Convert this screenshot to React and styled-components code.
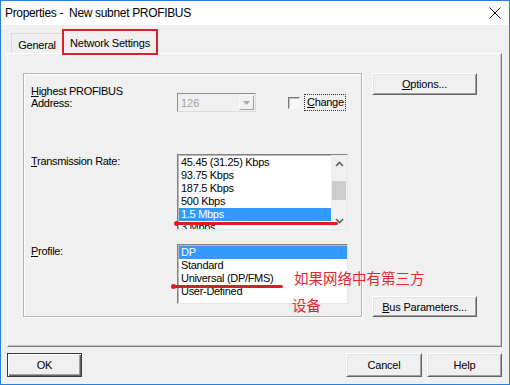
import React from "react";
import styled, { createGlobalStyle } from "styled-components";

const Global = createGlobalStyle`
  html, body { margin: 0; padding: 0; background: #fff; }
  body { font-family: "Liberation Sans", Arial, sans-serif; font-size: 11px; color: #000; }
  * { box-sizing: border-box; }
  u { text-decoration-thickness: 1px; text-underline-offset: 1px; }
`;

const Window = styled.div`
  width: 510px;
  height: 385px;
  border: 1px solid #2c7fd6;
  background: #f0f0f0;
  display: flex;
  flex-direction: column;
`;

const TitleBar = styled.div`
  height: 24px;
  flex: none;
  background: #fff;
  display: flex;
  align-items: center;
  justify-content: space-between;
  padding: 0 8px 0 4px;
  font-size: 12px;
  letter-spacing: -0.33px;
  white-space: pre;
`;

const Body = styled.div`
  flex: 1;
  display: flex;
  flex-direction: column;
  padding: 5px 7px 7px 6px;
`;

const TabRow = styled.div`
  height: 23px;
  flex: none;
  display: flex;
  align-items: flex-end;
  padding-left: 4px;
  position: relative;
  z-index: 2;
`;

const Tab = styled.div`
  position: relative;
  width: ${(p) => p.$w}px;
  height: ${(p) => (p.$active ? 24 : 20)}px;
  margin-bottom: ${(p) => (p.$active ? -1 : 0)}px;
  border: 1px solid ${(p) => (p.$active ? "#ffffff" : "#d9d9d9")};
  border-right-color: ${(p) => (p.$active ? "#8a8a8a" : "#d9d9d9")};
  border-bottom: none;
  background: #f0f0f0;
  display: flex;
  align-items: center;
  justify-content: center;
  padding-top: ${(p) => (p.$active ? 0 : 2)}px;
  letter-spacing: -0.2px;
`;

const RedBox = styled.div`
  position: absolute;
  top: -2px;
  left: -2px;
  right: -2px;
  bottom: -1px;
  border: 2px solid #d5222c;
  pointer-events: none;
`;

const Panel = styled.div`
  flex: 1;
  display: flex;
  align-items: stretch;
  padding: 19px 0 29px 15px;
  border: 1px solid;
  border-color: #ffffff #7a7a7a #7a7a7a #ffffff;
  box-shadow: inset -1px -1px 0 #c8c8c8;
  background: #f0f0f0;
  position: relative;
  z-index: 1;
`;

const GroupBox = styled.div`
  width: 339px;
  border: 1px solid #b4b4b4;
  box-shadow: inset 1px 1px 0 #fff, 1px 1px 0 #fff;
  padding: 11px 0 0 7px;
  display: flex;
  flex-direction: column;
`;

const Row = styled.div`
  display: grid;
  grid-template-columns: 146px auto;
  align-items: start;
  margin-top: ${(p) => p.$gap || 0}px;
`;

const Label = styled.div`
  line-height: ${(p) => (p.$lh ? p.$lh : 13)}px;
  padding-top: ${(p) => p.$pt || 0}px;
  letter-spacing: -0.3px;
  white-space: nowrap;
`;

const ControlLine = styled.div`
  display: flex;
  align-items: center;
  margin-top: 8px;
`;

const Combo = styled.div`
  width: 79px;
  height: 19px;
  border: 1px solid;
  border-color: #8f8f8f #dcdcdc #dcdcdc #8f8f8f;
  background: #f0f0f0;
  display: flex;
  align-items: center;
  justify-content: space-between;
  padding: 0 1px 0 3px;
  color: #a3a3a3;
`;

const ComboArrow = styled.div`
  width: 15px;
  height: 15px;
  border: 1px solid;
  border-color: #fafafa #a0a0a0 #a0a0a0 #fafafa;
  display: flex;
  align-items: center;
  justify-content: center;
`;

const CheckBox = styled.div`
  width: 12px;
  height: 12px;
  margin-left: 32px;
  border: 1px solid;
  border-color: #7a7a7a #f5f5f5 #f5f5f5 #7a7a7a;
  box-shadow: inset 1px 1px 0 #c4c4c4;
  background: #f7f7f7;
`;

const CheckLabel = styled.div`
  margin-left: 5px;
  padding: 1px 1px 2px 2px;
  outline: 1px dotted #333;
  letter-spacing: -0.3px;
  line-height: 12px;
`;

const Cell = styled.div`
  position: relative;
`;

const ListBox = styled.div`
  width: 171px;
  height: ${(p) => p.$h}px;
  border: 1px solid;
  border-color: #828282 #e6e6e6 #e6e6e6 #828282;
  box-shadow: inset 1px 1px 0 #b9b9b9;
  background: #fff;
  display: flex;
  padding: 1px 0 0 1px;
`;

const Items = styled.div`
  flex: 1;
  overflow: hidden;
`;

const Item = styled.div`
  height: 13px;
  line-height: 13px;
  padding-left: 2px;
  white-space: nowrap;
  letter-spacing: -0.3px;
  background: ${(p) => (p.$sel ? "#3399ff" : "transparent")};
  color: ${(p) => (p.$sel ? "#fff" : "#000")};
`;

const ScrollBar = styled.div`
  width: 16px;
  background: #f0f0f0;
  display: flex;
  flex-direction: column;
  margin-top: -1px;
`;

const ScrollBtn = styled.div`
  height: 17px;
  display: flex;
  align-items: center;
  justify-content: center;
`;

const Track = styled.div`
  flex: 1;
  padding: 9px 1px 0 1px;
`;

const Thumb = styled.div`
  height: 19px;
  background: #cdcdcd;
`;

const RedLine = styled.div`
  position: absolute;
  left: ${(p) => p.$left}px;
  top: ${(p) => p.$top}px;
  width: ${(p) => p.$w}px;
  height: 3px;
  border-radius: 2px;
  background: #dd1c24;
  pointer-events: none;
  &::before {
    content: "";
    position: absolute;
    left: -1px;
    top: -1px;
    width: 5px;
    height: 5px;
    border-radius: 50%;
    background: #dd1c24;
  }
`;

const Note = styled.div`
  position: absolute;
  left: 117px;
  top: 20px;
  font-family: "Noto Sans CJK SC", "Noto Sans", sans-serif;
  font-size: 14.5px;
  line-height: 27px;
  color: #e4262d;
  white-space: nowrap;
`;

const NoteLine = styled.div`
  margin-left: ${(p) => p.$indent || 0}px;
`;

const SideColumn = styled.div`
  margin-left: 10px;
  display: flex;
  flex-direction: column;
  justify-content: space-between;
`;

const Button = styled.div`
  width: ${(p) => p.$w}px;
  height: ${(p) => p.$h}px;
  background: #f0f0f0;
  border: 1px solid;
  border-color: ${(p) =>
    p.$default ? "#3a3a3a" : "#ffffff #646464 #646464 #ffffff"};
  box-shadow: ${(p) =>
    p.$default
      ? "inset 1px 1px 0 #ffffff, inset -1px -1px 0 #646464, inset -2px -2px 0 #a0a0a0"
      : "inset 1px 1px 0 #e3e3e3, inset -1px -1px 0 #a0a0a0"};
  display: flex;
  align-items: center;
  justify-content: center;
  letter-spacing: -0.2px;
  flex: none;
`;

const Footer = styled.div`
  margin-top: 6px;
  height: 24px;
  flex: none;
  display: flex;
  justify-content: space-between;
`;

const ButtonGroup = styled.div`
  display: flex;
  gap: 5px;
`;

const CloseIcon = () => (
  <svg width="12" height="12" viewBox="0 0 12 12">
    <path d="M0.5 0.5 L11.5 11.5 M11.5 0.5 L0.5 11.5" stroke="#111" strokeWidth="1" fill="none" />
  </svg>
);

const Chevron = ({ up }) => (
  <svg width="9" height="6" viewBox="0 0 9 6">
    <path
      d={up ? "M1 5 L4.5 1.5 L8 5" : "M1 1 L4.5 4.5 L8 1"}
      stroke="#606060"
      strokeWidth="1.6"
      fill="none"
    />
  </svg>
);

const DownTriangle = () => (
  <svg width="7" height="4" viewBox="0 0 7 4">
    <path d="M0 0 L7 0 L3.5 4 Z" fill="#a8a8a8" />
  </svg>
);

const rates = [
  "45.45 (31.25) Kbps",
  "93.75 Kbps",
  "187.5 Kbps",
  "500 Kbps",
  "1.5 Mbps",
  "3 Mbps",
];
const profiles = ["DP", "Standard", "Universal (DP/FMS)", "User-Defined"];

export default function App() {
  return (
    <>
      <Global />
      <Window>
        <TitleBar>
          <span>Properties -  New subnet PROFIBUS</span>
          <CloseIcon />
        </TitleBar>
        <Body>
          <TabRow>
            <Tab $w={52}>General</Tab>
            <Tab $w={94} $active>
              Network Settings
              <RedBox />
            </Tab>
          </TabRow>
          <Panel>
            <GroupBox>
              <Row>
                <Label $lh={12}>
                  <u>H</u>ighest PROFIBUS
                  <br />
                  Address:
                </Label>
                <ControlLine>
                  <Combo>
                    <span>126</span>
                    <ComboArrow>
                      <DownTriangle />
                    </ComboArrow>
                  </Combo>
                  <CheckBox />
                  <CheckLabel>
                    <u>C</u>hange
                  </CheckLabel>
                </ControlLine>
              </Row>
              <Row $gap={42}>
                <Label $pt={1}>
                  <u>T</u>ransmission Rate:
                </Label>
                <Cell>
                  <ListBox $h={76}>
                    <Items>
                      {rates.map((r) => (
                        <Item key={r} $sel={r === "1.5 Mbps"}>
                          {r}
                        </Item>
                      ))}
                    </Items>
                    <ScrollBar>
                      <ScrollBtn>
                        <Chevron up />
                      </ScrollBtn>
                      <Track>
                        <Thumb />
                      </Track>
                      <ScrollBtn>
                        <Chevron />
                      </ScrollBtn>
                    </ScrollBar>
                  </ListBox>
                  <RedLine $left={-2} $top={68} $w={163} />
                </Cell>
              </Row>
              <Row $gap={14}>
                <Label $pt={1}>
                  <u>P</u>rofile:
                </Label>
                <Cell>
                  <ListBox $h={60}>
                    <Items>
                      {profiles.map((r) => (
                        <Item key={r} $sel={r === "DP"}>
                          {r}
                        </Item>
                      ))}
                    </Items>
                  </ListBox>
                  <RedLine $left={-5} $top={41} $w={111} />
                  <Note>
                    <NoteLine>如果网络中有第三方</NoteLine>
                    <NoteLine $indent={-2}>设备</NoteLine>
                  </Note>
                </Cell>
              </Row>
            </GroupBox>
            <SideColumn>
              <Button $w={105} $h={22}>
                <span>
                  <u>O</u>ptions...
                </span>
              </Button>
              <Button $w={105} $h={21}>
                <span>
                  <u>B</u>us Parameters...
                </span>
              </Button>
            </SideColumn>
          </Panel>
          <Footer>
            <Button $w={75} $h={24} $default>
              OK
            </Button>
            <ButtonGroup>
              <Button $w={76} $h={24}>
                Cancel
              </Button>
              <Button $w={75} $h={24}>
                Help
              </Button>
            </ButtonGroup>
          </Footer>
        </Body>
      </Window>
    </>
  );
}
